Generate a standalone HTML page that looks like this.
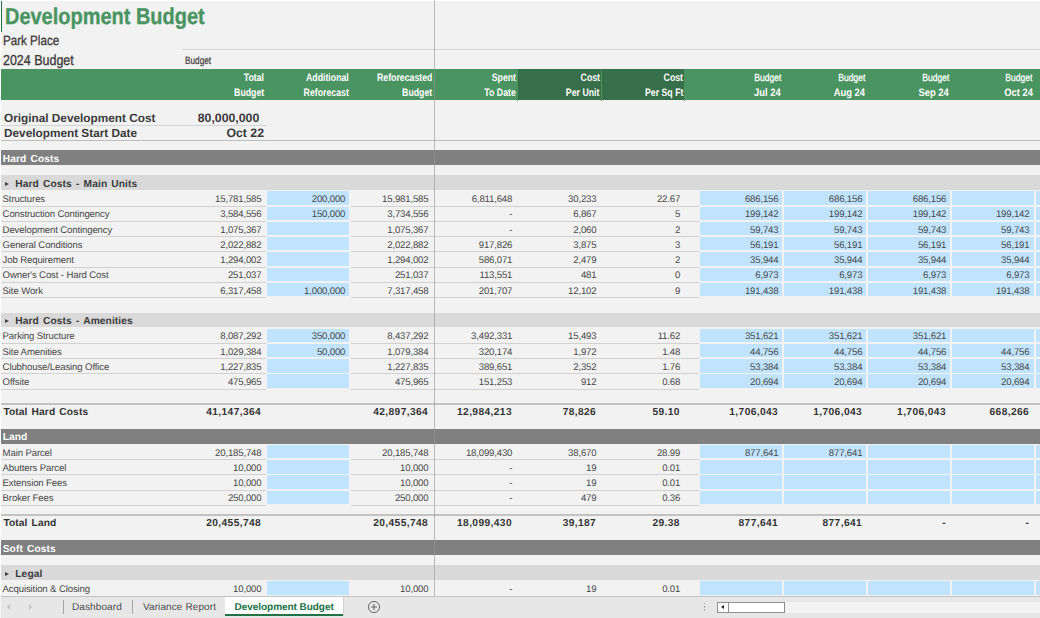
<!DOCTYPE html>
<html lang="en"><head><meta charset="utf-8"><title>Development Budget</title>
<style>
*{margin:0;padding:0;box-sizing:border-box}
html,body{width:1040px;height:618px;overflow:hidden;background:#fff}
body{position:relative;font-family:"Liberation Sans",Arial,sans-serif;color:#3a3a3a;text-rendering:geometricPrecision}
#sheet{position:absolute;left:1px;top:1px;width:1039px;height:617px;background:#f2f2f2}
#w{position:absolute;left:0;top:0;width:1040px;height:618px;overflow:hidden}
#w>div,#w>i{position:absolute}
.sel{left:1px;top:.5px;width:1.45px;height:31px;background:#1f6f43}
.title{left:5.4px;top:1.4px;height:30px;line-height:30px;font-size:23px;font-weight:bold;color:#4a9462;white-space:nowrap}
.title span{display:inline-block;-webkit-text-stroke:.35px #4a9462;transform:scaleX(.868);transform-origin:0 50%}
.sub{left:3.4px;height:18px;line-height:18px;font-size:13.5px;color:#3b3838;white-space:nowrap}
.sub span{display:inline-block;-webkit-text-stroke:.3px #3b3838;transform:scaleX(.86);transform-origin:0 50%}
.sub2{font-size:14.5px}
.bud{left:184.5px;top:53px;height:16px;line-height:16px;font-size:10.5px;color:#3b3838}
.bud span{display:inline-block;-webkit-text-stroke:.2px #3b3838;transform:scaleX(.785);transform-origin:0 50%}
.gh{top:69.1px;height:30.8px;background:#4a9462}
.gh.dk{background:#376f4a}
.vdk{top:69.1px;height:31.8px;width:1.1px;background:#4a9462}
.hd{height:15px;line-height:15px;text-align:right;color:#fff;font-weight:bold;font-size:10.8px;white-space:nowrap}
.hd span{display:inline-block;transform:scaleX(.81);transform-origin:100% 50%}
.hd.sm{font-weight:normal;font-size:10.2px}
.hd.sm span{-webkit-text-stroke:.25px #fff;transform:scaleX(.835)}
.hd.mo span{transform:scaleX(.87)}
.b13{height:15px;line-height:15px;font-size:11.8px;font-weight:bold;color:#3a3a3a;white-space:nowrap}
.r{text-align:right}
.b13.n{font-size:12.3px}
.dkb{left:1px;width:1039px;background:#808080}
.ltb{left:1px;width:1039px;background:#d9d9d9}
.dkbt,.ltbt,.tl{height:15px;line-height:15px;font-weight:bold;font-size:10.2px;white-space:nowrap;letter-spacing:.1px;word-spacing:1.2px}
.dkbt{left:2.7px;color:#fff}
.ltbt{left:15.3px;color:#3a3a3a}
.tl{left:3.4px;color:#333}
.tri{position:absolute;left:-10.5px;top:4.7px;width:0;height:0;border-left:4.5px solid #404040;border-top:2.4px solid transparent;border-bottom:2.4px solid transparent}
.lab{left:2.6px;height:15px;line-height:15px;font-size:9.6px;letter-spacing:-.13px;color:#474747;white-space:nowrap}
.c{height:15px;line-height:15px;text-align:right;font-size:9.6px;letter-spacing:-.17px;color:#474747;white-space:nowrap}
.c.tb{font-weight:bold;font-size:10.2px;letter-spacing:.4px;color:#333}
.bl{background:#c0e4fe}
.fz{left:433.6px;top:0;width:1.4px;height:597px;background:rgba(150,150,150,.62)}
.tabbar{left:0;top:596px;width:1040px;height:22px;background:#e7e7e7;border-top:1.5px solid #c2c2c2}
.tabbar>*{position:absolute}
.tab{top:1px;height:19px;line-height:19px;font-size:10px;color:#4c4c4c;white-space:nowrap}
.tab span{display:inline-block;letter-spacing:.1px}
.tab.act{top:0;background:#fff;height:18.5px;line-height:21px;border-bottom:2px solid #217346;box-shadow:.8px 0 0 #cdcdcd;color:#217346;text-align:center}
.tab.act b{display:inline-block;font-size:10px;letter-spacing:-.05px}
.ws{left:0;top:-1.5px;width:1px;height:22px;background:#f6f6f6}
.sep{top:2.5px;width:1px;height:14.5px;background:#a4a4a4}
.ar{top:7px;width:0;height:0;border-top:3px solid transparent;border-bottom:3px solid transparent}
.ar.l{left:7px;border-right:3.5px solid #c4c4c4}
.ar.rr{left:29px;border-left:3.5px solid #c4c4c4}
.plus{left:367px;top:2.9px}
.dots{left:704.2px;top:6px;width:1.3px;height:8px;background:repeating-linear-gradient(#a8a8a8 0 1.4px,transparent 1.4px 3.2px)}
.track{left:785px;top:4.5px;width:255px;height:11.4px;background:#f3f3f3}
.sb{left:717px;top:4.5px;width:68px;height:11.4px;background:#fff;border:1px solid #8e8e8e}
.sb i{position:absolute;left:0;top:0;width:11px;height:9.4px;border-right:1px solid #8e8e8e}
.sb i:after{content:"";position:absolute;left:3px;top:2.3px;border-right:3.5px solid #222;border-top:2.4px solid transparent;border-bottom:2.4px solid transparent}
</style></head>
<body><div id="sheet"></div><div id="w">
<div class="sel"></div>
<div class="title"><span>Development Budget</span></div>
<div class="sub" style="top:31.5px"><span>Park Place</span></div>
<div class="sub sub2" style="top:52px"><span>2024 Budget</span></div>
<div class="hl" style="left:182px;width:858px;top:49.1px;height:1px;background:#d3d3d3"></div>
<div class="bud"><span>Budget</span></div>
<div class="gh" style="left:1px;width:1039px"></div>
<div class="gh dk" style="left:518px;width:166.3px"></div>
<div class="vdk" style="left:516.9px"></div><div class="vdk" style="left:600.6px"></div><div class="vdk" style="left:684.2px"></div>
<div class="hd" style="left:143px;width:121.3px;top:71px"><span>Total</span></div>
<div class="hd" style="left:143px;width:121.3px;top:86px"><span>Budget</span></div>
<div class="hd" style="left:226px;width:122.9px;top:71px"><span>Additional</span></div>
<div class="hd" style="left:226px;width:122.9px;top:86px"><span>Reforecast</span></div>
<div class="hd" style="left:310px;width:122px;top:71px"><span>Reforecasted</span></div>
<div class="hd" style="left:310px;width:122px;top:86px"><span>Budget</span></div>
<div class="hd" style="left:395px;width:121.2px;top:71px"><span>Spent</span></div>
<div class="hd" style="left:395px;width:121.2px;top:86px"><span>To Date</span></div>
<div class="hd" style="left:478px;width:121.7px;top:71px"><span>Cost</span></div>
<div class="hd" style="left:478px;width:121.7px;top:86px"><span>Per Unit</span></div>
<div class="hd" style="left:562px;width:121.3px;top:71px"><span>Cost</span></div>
<div class="hd" style="left:562px;width:121.3px;top:86px"><span>Per Sq Ft</span></div>
<div class="hd sm" style="left:659px;width:122px;top:71px"><span>Budget</span></div>
<div class="hd mo" style="left:659px;width:122px;top:86px"><span>Jul 24</span></div>
<div class="hd sm" style="left:743px;width:122px;top:71px"><span>Budget</span></div>
<div class="hd mo" style="left:743px;width:122px;top:86px"><span>Aug 24</span></div>
<div class="hd sm" style="left:827px;width:121.8px;top:71px"><span>Budget</span></div>
<div class="hd mo" style="left:827px;width:121.8px;top:86px"><span>Sep 24</span></div>
<div class="hd sm" style="left:911px;width:121.7px;top:71px"><span>Budget</span></div>
<div class="hd mo" style="left:911px;width:121.7px;top:86px"><span>Oct 24</span></div>
<div class="b13" style="left:4px;top:111px">Original Development Cost</div>
<div class="b13" style="left:4px;top:126px">Development Start Date</div>
<div class="b13 r n" style="left:160px;width:99.3px;top:111px">80,000,000</div>
<div class="b13 r n" style="left:160px;width:104px;top:126px">Oct 22</div>
<div class="hl" style="left:1px;width:266px;top:125px;height:1px;background:#d4d4d4"></div>
<div class="hl" style="left:1px;width:1039px;top:140px;height:1px;background:#bdbdbd"></div>
<div class="dkb" style="top:150px;height:14.8px"></div>
<div class="dkbt" style="top:152px">Hard Costs</div>
<div class="ltb" style="top:175.1px;height:14.6px"></div>
<div class="ltbt" style="top:177px"><i class="tri"></i>Hard Costs - Main Units</div>
<div class="bl" style="left:266.8px;width:82.4px;top:191.3px;height:13.45px"></div>
<div class="bl" style="left:699.8px;width:82.4px;top:191.3px;height:13.45px"></div>
<div class="bl" style="left:783.8px;width:82.4px;top:191.3px;height:13.45px"></div>
<div class="bl" style="left:867.8px;width:82.4px;top:191.3px;height:13.45px"></div>
<div class="bl" style="left:951.8px;width:82.4px;top:191.3px;height:13.45px"></div>
<div class="bl" style="left:1035.8px;width:8.4px;top:191.3px;height:13.45px"></div>
<div class="lab" style="top:192px">Structures</div>
<div class="c n" style="left:171.43px;width:90px;top:192px">15,781,585</div>
<div class="c n" style="left:255.23px;width:90px;top:192px">200,000</div>
<div class="c n" style="left:338.43px;width:90px;top:192px">15,981,585</div>
<div class="c n" style="left:422.23px;width:90px;top:192px">6,811,648</div>
<div class="c n" style="left:506.43px;width:90px;top:192px">30,233</div>
<div class="c n" style="left:590.13px;width:90px;top:192px">22.67</div>
<div class="c n" style="left:688.43px;width:90px;top:192px">686,156</div>
<div class="c n" style="left:772.33px;width:90px;top:192px">686,156</div>
<div class="c n" style="left:856.23px;width:90px;top:192px">686,156</div>
<div class="hl" style="left:1px;width:264.5px;top:205.55px;height:1px;background:#d1d1d1"></div>
<div class="hl" style="left:350.5px;width:348.5px;top:205.55px;height:1px;background:#d1d1d1"></div>
<div class="bl" style="left:266.8px;width:82.4px;top:206.55px;height:13.45px"></div>
<div class="bl" style="left:699.8px;width:82.4px;top:206.55px;height:13.45px"></div>
<div class="bl" style="left:783.8px;width:82.4px;top:206.55px;height:13.45px"></div>
<div class="bl" style="left:867.8px;width:82.4px;top:206.55px;height:13.45px"></div>
<div class="bl" style="left:951.8px;width:82.4px;top:206.55px;height:13.45px"></div>
<div class="bl" style="left:1035.8px;width:8.4px;top:206.55px;height:13.45px"></div>
<div class="lab" style="top:207px">Construction Contingency</div>
<div class="c n" style="left:171.43px;width:90px;top:207px">3,584,556</div>
<div class="c n" style="left:255.23px;width:90px;top:207px">150,000</div>
<div class="c n" style="left:338.43px;width:90px;top:207px">3,734,556</div>
<div class="c n" style="left:422.23px;width:90px;top:207px">-</div>
<div class="c n" style="left:506.43px;width:90px;top:207px">6,867</div>
<div class="c n" style="left:590.13px;width:90px;top:207px">5</div>
<div class="c n" style="left:688.43px;width:90px;top:207px">199,142</div>
<div class="c n" style="left:772.33px;width:90px;top:207px">199,142</div>
<div class="c n" style="left:856.23px;width:90px;top:207px">199,142</div>
<div class="c n" style="left:939.43px;width:90px;top:207px">199,142</div>
<div class="hl" style="left:1px;width:264.5px;top:220.8px;height:1px;background:#d1d1d1"></div>
<div class="hl" style="left:350.5px;width:348.5px;top:220.8px;height:1px;background:#d1d1d1"></div>
<div class="bl" style="left:266.8px;width:82.4px;top:221.8px;height:13.45px"></div>
<div class="bl" style="left:699.8px;width:82.4px;top:221.8px;height:13.45px"></div>
<div class="bl" style="left:783.8px;width:82.4px;top:221.8px;height:13.45px"></div>
<div class="bl" style="left:867.8px;width:82.4px;top:221.8px;height:13.45px"></div>
<div class="bl" style="left:951.8px;width:82.4px;top:221.8px;height:13.45px"></div>
<div class="bl" style="left:1035.8px;width:8.4px;top:221.8px;height:13.45px"></div>
<div class="lab" style="top:223px">Development Contingency</div>
<div class="c n" style="left:171.43px;width:90px;top:223px">1,075,367</div>
<div class="c n" style="left:338.43px;width:90px;top:223px">1,075,367</div>
<div class="c n" style="left:422.23px;width:90px;top:223px">-</div>
<div class="c n" style="left:506.43px;width:90px;top:223px">2,060</div>
<div class="c n" style="left:590.13px;width:90px;top:223px">2</div>
<div class="c n" style="left:688.43px;width:90px;top:223px">59,743</div>
<div class="c n" style="left:772.33px;width:90px;top:223px">59,743</div>
<div class="c n" style="left:856.23px;width:90px;top:223px">59,743</div>
<div class="c n" style="left:939.43px;width:90px;top:223px">59,743</div>
<div class="hl" style="left:1px;width:264.5px;top:236.05px;height:1px;background:#d1d1d1"></div>
<div class="hl" style="left:350.5px;width:348.5px;top:236.05px;height:1px;background:#d1d1d1"></div>
<div class="bl" style="left:266.8px;width:82.4px;top:237.05px;height:13.45px"></div>
<div class="bl" style="left:699.8px;width:82.4px;top:237.05px;height:13.45px"></div>
<div class="bl" style="left:783.8px;width:82.4px;top:237.05px;height:13.45px"></div>
<div class="bl" style="left:867.8px;width:82.4px;top:237.05px;height:13.45px"></div>
<div class="bl" style="left:951.8px;width:82.4px;top:237.05px;height:13.45px"></div>
<div class="bl" style="left:1035.8px;width:8.4px;top:237.05px;height:13.45px"></div>
<div class="lab" style="top:238px">General Conditions</div>
<div class="c n" style="left:171.43px;width:90px;top:238px">2,022,882</div>
<div class="c n" style="left:338.43px;width:90px;top:238px">2,022,882</div>
<div class="c n" style="left:422.23px;width:90px;top:238px">917,826</div>
<div class="c n" style="left:506.43px;width:90px;top:238px">3,875</div>
<div class="c n" style="left:590.13px;width:90px;top:238px">3</div>
<div class="c n" style="left:688.43px;width:90px;top:238px">56,191</div>
<div class="c n" style="left:772.33px;width:90px;top:238px">56,191</div>
<div class="c n" style="left:856.23px;width:90px;top:238px">56,191</div>
<div class="c n" style="left:939.43px;width:90px;top:238px">56,191</div>
<div class="hl" style="left:1px;width:264.5px;top:251.3px;height:1px;background:#d1d1d1"></div>
<div class="hl" style="left:350.5px;width:348.5px;top:251.3px;height:1px;background:#d1d1d1"></div>
<div class="bl" style="left:266.8px;width:82.4px;top:252.3px;height:13.45px"></div>
<div class="bl" style="left:699.8px;width:82.4px;top:252.3px;height:13.45px"></div>
<div class="bl" style="left:783.8px;width:82.4px;top:252.3px;height:13.45px"></div>
<div class="bl" style="left:867.8px;width:82.4px;top:252.3px;height:13.45px"></div>
<div class="bl" style="left:951.8px;width:82.4px;top:252.3px;height:13.45px"></div>
<div class="bl" style="left:1035.8px;width:8.4px;top:252.3px;height:13.45px"></div>
<div class="lab" style="top:253px">Job Requirement</div>
<div class="c n" style="left:171.43px;width:90px;top:253px">1,294,002</div>
<div class="c n" style="left:338.43px;width:90px;top:253px">1,294,002</div>
<div class="c n" style="left:422.23px;width:90px;top:253px">586,071</div>
<div class="c n" style="left:506.43px;width:90px;top:253px">2,479</div>
<div class="c n" style="left:590.13px;width:90px;top:253px">2</div>
<div class="c n" style="left:688.43px;width:90px;top:253px">35,944</div>
<div class="c n" style="left:772.33px;width:90px;top:253px">35,944</div>
<div class="c n" style="left:856.23px;width:90px;top:253px">35,944</div>
<div class="c n" style="left:939.43px;width:90px;top:253px">35,944</div>
<div class="hl" style="left:1px;width:264.5px;top:266.55px;height:1px;background:#d1d1d1"></div>
<div class="hl" style="left:350.5px;width:348.5px;top:266.55px;height:1px;background:#d1d1d1"></div>
<div class="bl" style="left:266.8px;width:82.4px;top:267.55px;height:13.45px"></div>
<div class="bl" style="left:699.8px;width:82.4px;top:267.55px;height:13.45px"></div>
<div class="bl" style="left:783.8px;width:82.4px;top:267.55px;height:13.45px"></div>
<div class="bl" style="left:867.8px;width:82.4px;top:267.55px;height:13.45px"></div>
<div class="bl" style="left:951.8px;width:82.4px;top:267.55px;height:13.45px"></div>
<div class="bl" style="left:1035.8px;width:8.4px;top:267.55px;height:13.45px"></div>
<div class="lab" style="top:268px">Owner's Cost - Hard Cost</div>
<div class="c n" style="left:171.43px;width:90px;top:268px">251,037</div>
<div class="c n" style="left:338.43px;width:90px;top:268px">251,037</div>
<div class="c n" style="left:422.23px;width:90px;top:268px">113,551</div>
<div class="c n" style="left:506.43px;width:90px;top:268px">481</div>
<div class="c n" style="left:590.13px;width:90px;top:268px">0</div>
<div class="c n" style="left:688.43px;width:90px;top:268px">6,973</div>
<div class="c n" style="left:772.33px;width:90px;top:268px">6,973</div>
<div class="c n" style="left:856.23px;width:90px;top:268px">6,973</div>
<div class="c n" style="left:939.43px;width:90px;top:268px">6,973</div>
<div class="hl" style="left:1px;width:264.5px;top:281.8px;height:1px;background:#d1d1d1"></div>
<div class="hl" style="left:350.5px;width:348.5px;top:281.8px;height:1px;background:#d1d1d1"></div>
<div class="bl" style="left:266.8px;width:82.4px;top:282.8px;height:13.45px"></div>
<div class="bl" style="left:699.8px;width:82.4px;top:282.8px;height:13.45px"></div>
<div class="bl" style="left:783.8px;width:82.4px;top:282.8px;height:13.45px"></div>
<div class="bl" style="left:867.8px;width:82.4px;top:282.8px;height:13.45px"></div>
<div class="bl" style="left:951.8px;width:82.4px;top:282.8px;height:13.45px"></div>
<div class="bl" style="left:1035.8px;width:8.4px;top:282.8px;height:13.45px"></div>
<div class="lab" style="top:284px">Site Work</div>
<div class="c n" style="left:171.43px;width:90px;top:284px">6,317,458</div>
<div class="c n" style="left:255.23px;width:90px;top:284px">1,000,000</div>
<div class="c n" style="left:338.43px;width:90px;top:284px">7,317,458</div>
<div class="c n" style="left:422.23px;width:90px;top:284px">201,707</div>
<div class="c n" style="left:506.43px;width:90px;top:284px">12,102</div>
<div class="c n" style="left:590.13px;width:90px;top:284px">9</div>
<div class="c n" style="left:688.43px;width:90px;top:284px">191,438</div>
<div class="c n" style="left:772.33px;width:90px;top:284px">191,438</div>
<div class="c n" style="left:856.23px;width:90px;top:284px">191,438</div>
<div class="c n" style="left:939.43px;width:90px;top:284px">191,438</div>
<div class="hl" style="left:1px;width:264.5px;top:297.05px;height:1px;background:#d1d1d1"></div>
<div class="hl" style="left:350.5px;width:348.5px;top:297.05px;height:1px;background:#d1d1d1"></div>
<div class="ltb" style="top:312.6px;height:14.7px"></div>
<div class="ltbt" style="top:314px"><i class="tri"></i>Hard Costs - Amenities</div>
<div class="bl" style="left:266.8px;width:82.4px;top:328.7px;height:13.45px"></div>
<div class="bl" style="left:699.8px;width:82.4px;top:328.7px;height:13.45px"></div>
<div class="bl" style="left:783.8px;width:82.4px;top:328.7px;height:13.45px"></div>
<div class="bl" style="left:867.8px;width:82.4px;top:328.7px;height:13.45px"></div>
<div class="bl" style="left:951.8px;width:82.4px;top:328.7px;height:13.45px"></div>
<div class="bl" style="left:1035.8px;width:8.4px;top:328.7px;height:13.45px"></div>
<div class="lab" style="top:329px">Parking Structure</div>
<div class="c n" style="left:171.43px;width:90px;top:329px">8,087,292</div>
<div class="c n" style="left:255.23px;width:90px;top:329px">350,000</div>
<div class="c n" style="left:338.43px;width:90px;top:329px">8,437,292</div>
<div class="c n" style="left:422.23px;width:90px;top:329px">3,492,331</div>
<div class="c n" style="left:506.43px;width:90px;top:329px">15,493</div>
<div class="c n" style="left:590.13px;width:90px;top:329px">11.62</div>
<div class="c n" style="left:688.43px;width:90px;top:329px">351,621</div>
<div class="c n" style="left:772.33px;width:90px;top:329px">351,621</div>
<div class="c n" style="left:856.23px;width:90px;top:329px">351,621</div>
<div class="hl" style="left:1px;width:264.5px;top:342.95px;height:1px;background:#d1d1d1"></div>
<div class="hl" style="left:350.5px;width:348.5px;top:342.95px;height:1px;background:#d1d1d1"></div>
<div class="bl" style="left:266.8px;width:82.4px;top:343.95px;height:13.45px"></div>
<div class="bl" style="left:699.8px;width:82.4px;top:343.95px;height:13.45px"></div>
<div class="bl" style="left:783.8px;width:82.4px;top:343.95px;height:13.45px"></div>
<div class="bl" style="left:867.8px;width:82.4px;top:343.95px;height:13.45px"></div>
<div class="bl" style="left:951.8px;width:82.4px;top:343.95px;height:13.45px"></div>
<div class="bl" style="left:1035.8px;width:8.4px;top:343.95px;height:13.45px"></div>
<div class="lab" style="top:345px">Site Amenities</div>
<div class="c n" style="left:171.43px;width:90px;top:345px">1,029,384</div>
<div class="c n" style="left:255.23px;width:90px;top:345px">50,000</div>
<div class="c n" style="left:338.43px;width:90px;top:345px">1,079,384</div>
<div class="c n" style="left:422.23px;width:90px;top:345px">320,174</div>
<div class="c n" style="left:506.43px;width:90px;top:345px">1,972</div>
<div class="c n" style="left:590.13px;width:90px;top:345px">1.48</div>
<div class="c n" style="left:688.43px;width:90px;top:345px">44,756</div>
<div class="c n" style="left:772.33px;width:90px;top:345px">44,756</div>
<div class="c n" style="left:856.23px;width:90px;top:345px">44,756</div>
<div class="c n" style="left:939.43px;width:90px;top:345px">44,756</div>
<div class="hl" style="left:1px;width:264.5px;top:358.2px;height:1px;background:#d1d1d1"></div>
<div class="hl" style="left:350.5px;width:348.5px;top:358.2px;height:1px;background:#d1d1d1"></div>
<div class="bl" style="left:266.8px;width:82.4px;top:359.2px;height:13.45px"></div>
<div class="bl" style="left:699.8px;width:82.4px;top:359.2px;height:13.45px"></div>
<div class="bl" style="left:783.8px;width:82.4px;top:359.2px;height:13.45px"></div>
<div class="bl" style="left:867.8px;width:82.4px;top:359.2px;height:13.45px"></div>
<div class="bl" style="left:951.8px;width:82.4px;top:359.2px;height:13.45px"></div>
<div class="bl" style="left:1035.8px;width:8.4px;top:359.2px;height:13.45px"></div>
<div class="lab" style="top:360px">Clubhouse/Leasing Office</div>
<div class="c n" style="left:171.43px;width:90px;top:360px">1,227,835</div>
<div class="c n" style="left:338.43px;width:90px;top:360px">1,227,835</div>
<div class="c n" style="left:422.23px;width:90px;top:360px">389,651</div>
<div class="c n" style="left:506.43px;width:90px;top:360px">2,352</div>
<div class="c n" style="left:590.13px;width:90px;top:360px">1.76</div>
<div class="c n" style="left:688.43px;width:90px;top:360px">53,384</div>
<div class="c n" style="left:772.33px;width:90px;top:360px">53,384</div>
<div class="c n" style="left:856.23px;width:90px;top:360px">53,384</div>
<div class="c n" style="left:939.43px;width:90px;top:360px">53,384</div>
<div class="hl" style="left:1px;width:264.5px;top:373.45px;height:1px;background:#d1d1d1"></div>
<div class="hl" style="left:350.5px;width:348.5px;top:373.45px;height:1px;background:#d1d1d1"></div>
<div class="bl" style="left:266.8px;width:82.4px;top:374.45px;height:13.45px"></div>
<div class="bl" style="left:699.8px;width:82.4px;top:374.45px;height:13.45px"></div>
<div class="bl" style="left:783.8px;width:82.4px;top:374.45px;height:13.45px"></div>
<div class="bl" style="left:867.8px;width:82.4px;top:374.45px;height:13.45px"></div>
<div class="bl" style="left:951.8px;width:82.4px;top:374.45px;height:13.45px"></div>
<div class="bl" style="left:1035.8px;width:8.4px;top:374.45px;height:13.45px"></div>
<div class="lab" style="top:375px">Offsite</div>
<div class="c n" style="left:171.43px;width:90px;top:375px">475,965</div>
<div class="c n" style="left:338.43px;width:90px;top:375px">475,965</div>
<div class="c n" style="left:422.23px;width:90px;top:375px">151,253</div>
<div class="c n" style="left:506.43px;width:90px;top:375px">912</div>
<div class="c n" style="left:590.13px;width:90px;top:375px">0.68</div>
<div class="c n" style="left:688.43px;width:90px;top:375px">20,694</div>
<div class="c n" style="left:772.33px;width:90px;top:375px">20,694</div>
<div class="c n" style="left:856.23px;width:90px;top:375px">20,694</div>
<div class="c n" style="left:939.43px;width:90px;top:375px">20,694</div>
<div class="hl" style="left:1px;width:264.5px;top:388.7px;height:1px;background:#d1d1d1"></div>
<div class="hl" style="left:350.5px;width:348.5px;top:388.7px;height:1px;background:#d1d1d1"></div>
<div class="hl" style="left:1px;width:1039px;top:402.9px;height:2.1px;background:#c2c2c2"></div>
<div class="tl" style="top:405px">Total Hard Costs</div>
<div class="c tb" style="left:171.2px;width:90px;top:405px">41,147,364</div>
<div class="c tb" style="left:338.2px;width:90px;top:405px">42,897,364</div>
<div class="c tb" style="left:422px;width:90px;top:405px">12,984,213</div>
<div class="c tb" style="left:506.2px;width:90px;top:405px">78,826</div>
<div class="c tb" style="left:589.9px;width:90px;top:405px">59.10</div>
<div class="c tb" style="left:688.2px;width:90px;top:405px">1,706,043</div>
<div class="c tb" style="left:772.1px;width:90px;top:405px">1,706,043</div>
<div class="c tb" style="left:856px;width:90px;top:405px">1,706,043</div>
<div class="c tb" style="left:939.2px;width:90px;top:405px">668,266</div>
<div class="dkb" style="top:429px;height:14.6px"></div>
<div class="dkbt" style="top:430px">Land</div>
<div class="bl" style="left:266.8px;width:82.4px;top:444.9px;height:13.45px"></div>
<div class="bl" style="left:699.8px;width:82.4px;top:444.9px;height:13.45px"></div>
<div class="bl" style="left:783.8px;width:82.4px;top:444.9px;height:13.45px"></div>
<div class="bl" style="left:867.8px;width:82.4px;top:444.9px;height:13.45px"></div>
<div class="bl" style="left:951.8px;width:82.4px;top:444.9px;height:13.45px"></div>
<div class="bl" style="left:1035.8px;width:8.4px;top:444.9px;height:13.45px"></div>
<div class="lab" style="top:446px">Main Parcel</div>
<div class="c n" style="left:171.43px;width:90px;top:446px">20,185,748</div>
<div class="c n" style="left:338.43px;width:90px;top:446px">20,185,748</div>
<div class="c n" style="left:422.23px;width:90px;top:446px">18,099,430</div>
<div class="c n" style="left:506.43px;width:90px;top:446px">38,670</div>
<div class="c n" style="left:590.13px;width:90px;top:446px">28.99</div>
<div class="c n" style="left:688.43px;width:90px;top:446px">877,641</div>
<div class="c n" style="left:772.33px;width:90px;top:446px">877,641</div>
<div class="hl" style="left:1px;width:264.5px;top:459.15px;height:1px;background:#d1d1d1"></div>
<div class="hl" style="left:350.5px;width:348.5px;top:459.15px;height:1px;background:#d1d1d1"></div>
<div class="bl" style="left:266.8px;width:82.4px;top:460.15px;height:13.45px"></div>
<div class="bl" style="left:699.8px;width:82.4px;top:460.15px;height:13.45px"></div>
<div class="bl" style="left:783.8px;width:82.4px;top:460.15px;height:13.45px"></div>
<div class="bl" style="left:867.8px;width:82.4px;top:460.15px;height:13.45px"></div>
<div class="bl" style="left:951.8px;width:82.4px;top:460.15px;height:13.45px"></div>
<div class="bl" style="left:1035.8px;width:8.4px;top:460.15px;height:13.45px"></div>
<div class="lab" style="top:461px">Abutters Parcel</div>
<div class="c n" style="left:171.43px;width:90px;top:461px">10,000</div>
<div class="c n" style="left:338.43px;width:90px;top:461px">10,000</div>
<div class="c n" style="left:422.23px;width:90px;top:461px">-</div>
<div class="c n" style="left:506.43px;width:90px;top:461px">19</div>
<div class="c n" style="left:590.13px;width:90px;top:461px">0.01</div>
<div class="hl" style="left:1px;width:264.5px;top:474.4px;height:1px;background:#d1d1d1"></div>
<div class="hl" style="left:350.5px;width:348.5px;top:474.4px;height:1px;background:#d1d1d1"></div>
<div class="bl" style="left:266.8px;width:82.4px;top:475.4px;height:13.45px"></div>
<div class="bl" style="left:699.8px;width:82.4px;top:475.4px;height:13.45px"></div>
<div class="bl" style="left:783.8px;width:82.4px;top:475.4px;height:13.45px"></div>
<div class="bl" style="left:867.8px;width:82.4px;top:475.4px;height:13.45px"></div>
<div class="bl" style="left:951.8px;width:82.4px;top:475.4px;height:13.45px"></div>
<div class="bl" style="left:1035.8px;width:8.4px;top:475.4px;height:13.45px"></div>
<div class="lab" style="top:476px">Extension Fees</div>
<div class="c n" style="left:171.43px;width:90px;top:476px">10,000</div>
<div class="c n" style="left:338.43px;width:90px;top:476px">10,000</div>
<div class="c n" style="left:422.23px;width:90px;top:476px">-</div>
<div class="c n" style="left:506.43px;width:90px;top:476px">19</div>
<div class="c n" style="left:590.13px;width:90px;top:476px">0.01</div>
<div class="hl" style="left:1px;width:264.5px;top:489.65px;height:1px;background:#d1d1d1"></div>
<div class="hl" style="left:350.5px;width:348.5px;top:489.65px;height:1px;background:#d1d1d1"></div>
<div class="bl" style="left:266.8px;width:82.4px;top:490.65px;height:13.45px"></div>
<div class="bl" style="left:699.8px;width:82.4px;top:490.65px;height:13.45px"></div>
<div class="bl" style="left:783.8px;width:82.4px;top:490.65px;height:13.45px"></div>
<div class="bl" style="left:867.8px;width:82.4px;top:490.65px;height:13.45px"></div>
<div class="bl" style="left:951.8px;width:82.4px;top:490.65px;height:13.45px"></div>
<div class="bl" style="left:1035.8px;width:8.4px;top:490.65px;height:13.45px"></div>
<div class="lab" style="top:491px">Broker Fees</div>
<div class="c n" style="left:171.43px;width:90px;top:491px">250,000</div>
<div class="c n" style="left:338.43px;width:90px;top:491px">250,000</div>
<div class="c n" style="left:422.23px;width:90px;top:491px">-</div>
<div class="c n" style="left:506.43px;width:90px;top:491px">479</div>
<div class="c n" style="left:590.13px;width:90px;top:491px">0.36</div>
<div class="hl" style="left:1px;width:264.5px;top:504.9px;height:1px;background:#d1d1d1"></div>
<div class="hl" style="left:350.5px;width:348.5px;top:504.9px;height:1px;background:#d1d1d1"></div>
<div class="hl" style="left:1px;width:1039px;top:513.9px;height:2.1px;background:#c2c2c2"></div>
<div class="tl" style="top:516px">Total Land</div>
<div class="c tb" style="left:171.2px;width:90px;top:516px">20,455,748</div>
<div class="c tb" style="left:338.2px;width:90px;top:516px">20,455,748</div>
<div class="c tb" style="left:422px;width:90px;top:516px">18,099,430</div>
<div class="c tb" style="left:506.2px;width:90px;top:516px">39,187</div>
<div class="c tb" style="left:589.9px;width:90px;top:516px">29.38</div>
<div class="c tb" style="left:688.2px;width:90px;top:516px">877,641</div>
<div class="c tb" style="left:772.1px;width:90px;top:516px">877,641</div>
<div class="c tb" style="left:856px;width:90px;top:516px">-</div>
<div class="c tb" style="left:939.2px;width:90px;top:516px">-</div>
<div class="dkb" style="top:539.8px;height:15.1px"></div>
<div class="dkbt" style="top:542px">Soft Costs</div>
<div class="ltb" style="top:564.9px;height:14.9px"></div>
<div class="ltbt" style="top:567px"><i class="tri"></i>Legal</div>
<div class="bl" style="left:266.8px;width:82.4px;top:581.4px;height:13.45px"></div>
<div class="bl" style="left:699.8px;width:82.4px;top:581.4px;height:13.45px"></div>
<div class="bl" style="left:783.8px;width:82.4px;top:581.4px;height:13.45px"></div>
<div class="bl" style="left:867.8px;width:82.4px;top:581.4px;height:13.45px"></div>
<div class="bl" style="left:951.8px;width:82.4px;top:581.4px;height:13.45px"></div>
<div class="bl" style="left:1035.8px;width:8.4px;top:581.4px;height:13.45px"></div>
<div class="lab" style="top:582px">Acquisition &amp; Closing</div>
<div class="c n" style="left:171.43px;width:90px;top:582px">10,000</div>
<div class="c n" style="left:338.43px;width:90px;top:582px">10,000</div>
<div class="c n" style="left:422.23px;width:90px;top:582px">-</div>
<div class="c n" style="left:506.43px;width:90px;top:582px">19</div>
<div class="c n" style="left:590.13px;width:90px;top:582px">0.01</div>
<div class="hl" style="left:1px;width:264.5px;top:595.65px;height:1px;background:#d1d1d1"></div>
<div class="hl" style="left:350.5px;width:348.5px;top:595.65px;height:1px;background:#d1d1d1"></div>
<div class="fz"></div>
<div class="tabbar">
<i class="ws"></i><i class="ar l"></i><i class="ar rr"></i>
<i class="sep" style="left:63px"></i><i class="sep" style="left:132px"></i>
<div class="tab" style="left:72px"><span>Dashboard</span></div>
<div class="tab" style="left:143px"><span>Variance Report</span></div>
<div class="tab act" style="left:225.3px;width:117.7px"><b>Development Budget</b></div>
<svg class="plus" width="14" height="14" viewBox="0 0 14 14"><circle cx="7" cy="7" r="5.6" fill="none" stroke="#6a6a6a" stroke-width="1"/><path d="M4 7h6M7 4v6" stroke="#6a6a6a" stroke-width="1.1"/></svg>
<i class="dots"></i>
<div class="track"></div>
<div class="sb"><i></i></div>
</div>
</div></body></html>
